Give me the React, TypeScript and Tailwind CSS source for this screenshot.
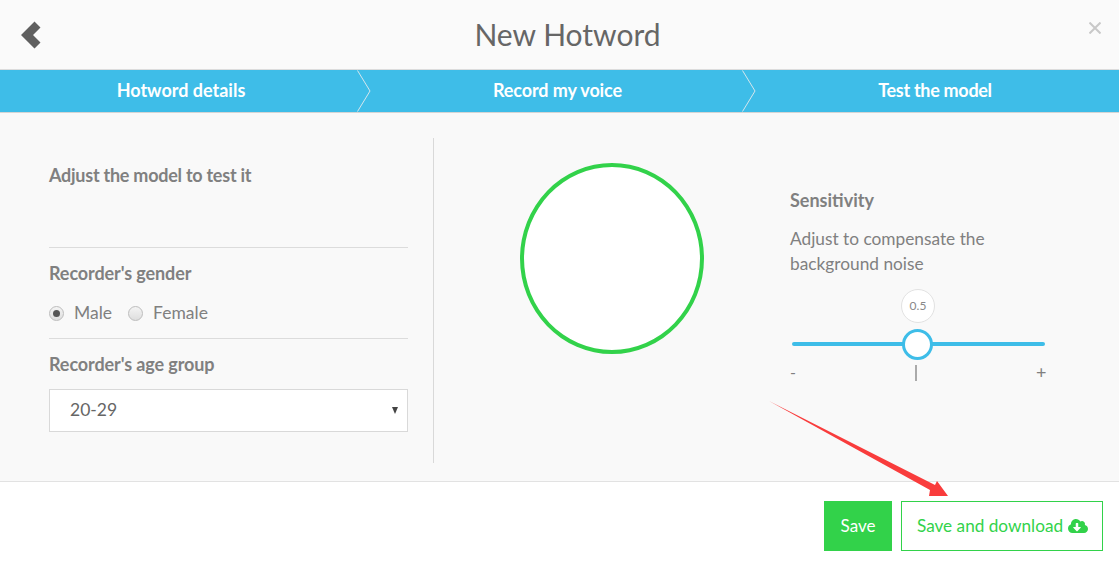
import React from "react";
import { FaCloudDownloadAlt } from "react-icons/fa";

const steps = [
  { label: "Hotword details", cls: "w-[358px] pl-[4px]" },
  { label: "Record my voice", cls: "w-[385px] pl-[14px] tracking-[-0.1px]" },
  { label: "Test the model", cls: "flex-1 pl-[8px] tracking-[-0.3px]" },
];

function StepArrow() {
  return (
    <svg width="14" height="42" viewBox="0 0 14 42" className="absolute right-[-13px] top-0 z-10" fill="none">
      <path d="M0.5 0.5 L13 21 L0.5 41.5" stroke="#d5e6ec" strokeWidth="1" />
    </svg>
  );
}

function Radio({ checked, label }: { checked?: boolean; label: string }) {
  return (
    <label className="flex items-center">
      <span className="w-[15px] h-[15px] rounded-full border border-[#bdbdbd] bg-[linear-gradient(#f4f4f4,#dedede)] flex items-center justify-center">
        {checked && <span className="w-[7px] h-[7px] rounded-full bg-[#555]" />}
      </span>
      <span className="ml-[10px] text-[17.5px] leading-6 text-[#808080]">{label}</span>
    </label>
  );
}

export default function App() {
  return (
    <div className="relative w-[1119px] h-[567px] bg-white overflow-hidden font-['Lato',sans-serif] text-[#808080]">
      {/* Header */}
      <div className="h-[70px] bg-[#fafafa] border-b border-[#dcdcdc] flex items-center justify-center relative">
        <h1 className="text-[30px] leading-none text-[#666] mb-[1px] pl-[16px]">New Hotword</h1>
        <button className="absolute left-[21px] top-[21px] text-[#5f5f5f]">
          <svg width="20" height="28" viewBox="0 0 20 28" fill="currentColor">
            <path d="M13.5 0.5 L19.5 6.5 L12 14 L19.5 21.5 L13.5 27.5 L0 14 Z" />
          </svg>
        </button>
        <svg width="12" height="12" viewBox="0 0 12 12" className="absolute left-[1089px] top-[22px]" stroke="#c8c8c8" strokeWidth="2">
          <path d="M0.5 0.5 L11.5 11.5 M11.5 0.5 L0.5 11.5" />
        </svg>
      </div>

      {/* Steps */}
      <div className="h-[43px] bg-[#3ebde8] border-b border-[#d5d5d5] flex">
        {steps.map((step, i) => (
          <div
            key={step.label}
            className={`relative flex items-center justify-center text-white font-bold text-[18px] pb-[2px] ${step.cls}`}
          >
            {step.label}
            {i < 2 && <StepArrow />}
          </div>
        ))}
      </div>

      {/* Body */}
      <div className="h-[369px] bg-[#f9f9f9] border-b border-[#e2e2e2] pt-[25px] flex">
        <div className="w-[434px] h-[325px] border-r border-[#d9d9d9] pl-[49px] pr-[25px]">
          <h3 className="font-bold text-[18px] leading-6 tracking-[-0.25px] mt-[25px] h-[84px]">Adjust the model to test it</h3>
          <div className="border-t border-[#dcdcdc] pt-[13px] h-[91px]">
            <h3 className="font-bold text-[18px] leading-6 tracking-[-0.1px]">Recorder's gender</h3>
            <div className="flex gap-[16px] mt-[16px]">
              <Radio checked label="Male" />
              <Radio label="Female" />
            </div>
          </div>
          <div className="border-t border-[#dcdcdc] pt-[13px]">
            <h3 className="font-bold text-[18px] leading-6 tracking-[-0.1px]">Recorder's age group</h3>
            <div className="mt-[13px] h-[43px] bg-white border border-[#d9d9d9] flex items-center justify-between pl-[20px] pr-[9px] text-[17.5px] text-[#666]">
              <span>20-29</span>
              <span className="w-0 h-0 border-x-[3.5px] border-x-transparent border-t-[7px] border-t-[#444]" />
            </div>
          </div>
        </div>

        <div className="w-[356px] flex justify-center">
          <div className="ml-[-1px] mt-[25px] w-[184px] h-[191px] rounded-[50%] bg-white border-[4px] border-[#32d24a]" />
        </div>

        <div className="w-[255px]">
          <h3 className="font-bold text-[18px] leading-6 mt-[50px]">Sensitivity</h3>
          <p className="text-[17.3px] leading-[25px] mt-[14px]">
            Adjust to compensate the
            <br />
            background noise
          </p>
          <div className="relative mt-[14px] h-[90px] w-[255px]">
            <div className="absolute left-[111px] top-[-1px] w-[34px] h-[34px] rounded-full bg-white border border-[#e2e2e2] flex items-center justify-center text-[12px] text-[#888]">
              0.5
            </div>
            <div className="absolute left-[2px] top-[52px] w-[253px] h-[4px] rounded-full bg-[#3ebde8]" />
            <div className="absolute left-[112px] top-[39px] w-[31px] h-[31px] rounded-full bg-white border-[3px] border-[#3ebde8]" />
            <span className="absolute left-0 top-[72px] text-[16px] leading-5">-</span>
            <span className="absolute left-[125px] top-[75px] w-[2px] h-[16px] bg-[#aaa]" />
            <span className="absolute left-[246px] top-[72px] text-[18px] leading-5">+</span>
          </div>
        </div>
      </div>

      {/* Footer */}
      <div className="h-[85px] flex justify-end items-start gap-[9px] pt-[19px] pr-[16px]">
        <button className="w-[68px] h-[50px] bg-[#32d24a] text-white text-[17px]">Save</button>
        <button className="w-[202px] h-[50px] bg-white border border-[#32d24a] text-[#32d24a] text-[17.2px] flex items-center justify-center gap-[5px] pl-[1px]">
          Save and download
          <FaCloudDownloadAlt className="text-[20px]" />
        </button>
      </div>

      {/* Annotation arrow */}
      <svg className="absolute left-0 top-0 pointer-events-none" width="1119" height="567">
        <polygon points="769,401 935,485 937,481 948,496 929,496 930,490" fill="#f93c3c" />
      </svg>
    </div>
  );
}
